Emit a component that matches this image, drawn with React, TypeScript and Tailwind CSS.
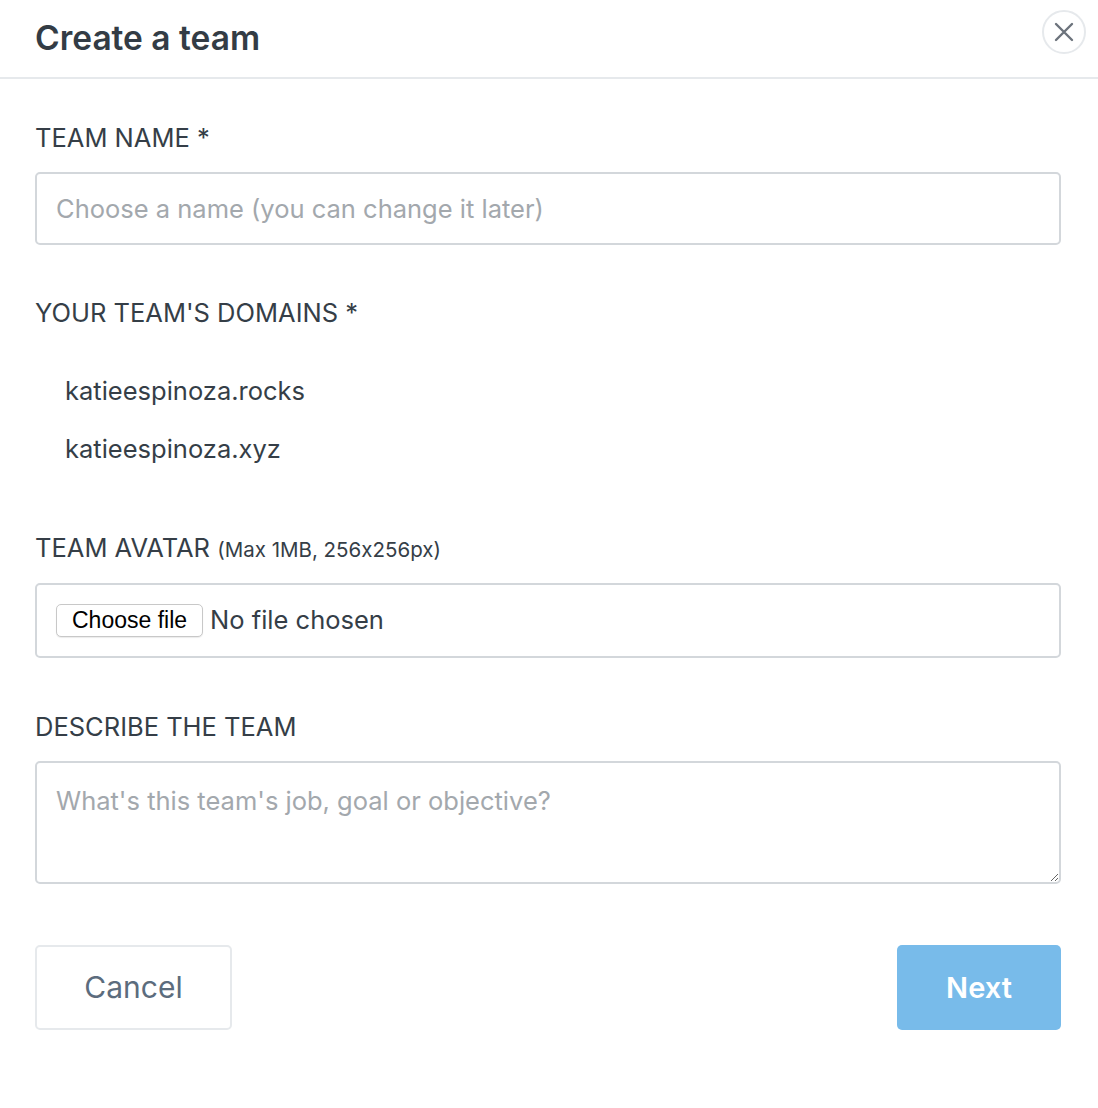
import React from 'react';

const font = { fontFamily: 'Inter, Lato, sans-serif', fontFeatureSettings: '"calt" 0' };

function Label({ children }: { children: React.ReactNode }) {
  return <div className="text-[25.5px] leading-[30px] text-[#353e47]">{children}</div>;
}

export default function App() {
  return (
    <div className="min-h-[1108px] bg-white" style={font}>
      {/* Header */}
      <div className="h-[79px] border-b-2 border-[#e6e9ec] pl-[35px] pr-[12px] flex justify-between">
        <h1 className="text-[33.5px] font-semibold text-[#333c45] leading-[40px] mt-[18px]">Create a team</h1>
        <button
          type="button"
          className="mt-[10px] w-[44px] h-[44px] rounded-full border-2 border-[#e6e9ec] flex items-center justify-center text-[#6c737c]"
        >
          <svg width="22" height="22" viewBox="0 0 22 22" fill="none" stroke="currentColor" strokeWidth="2.4" strokeLinecap="round">
            <path d="M3 3L19 19M19 3L3 19" />
          </svg>
        </button>
      </div>

      <form className="pl-[35px] pr-[37px] pt-[44px]" onSubmit={(e) => e.preventDefault()}>
        <Label>TEAM NAME *</Label>
        <input
          type="text"
          placeholder="Choose a name (you can change it later)"
          className="mt-[19px] w-full h-[73px] rounded-[5px] border-2 border-[#d3d7db] px-[19px] text-[25.5px] text-[#353e47] placeholder:text-[#a3a8ad] outline-none"
        />

        <div className="mt-[53px]">
          <Label>YOUR TEAM'S DOMAINS *</Label>
        </div>
        <div className="pl-[30px] mt-[48px] flex flex-col gap-[28px] text-[25.5px] leading-[30px] text-[#353e47]">
          <div>katieespinoza.rocks</div>
          <div>katieespinoza.xyz</div>
        </div>

        <div className="mt-[69px]">
          <Label>
            TEAM AVATAR <span className="text-[20.5px]">(Max 1MB, 256x256px)</span>
          </Label>
        </div>
        <div className="mt-[18px] h-[75px] rounded-[5px] border-2 border-[#d3d7db] px-[19px] flex items-center gap-[7px]">
          <span className="h-[33px] px-[15px] rounded-[5px] border border-[#c8c8c8] bg-white shadow-[0_1px_1px_rgba(0,0,0,0.08)] flex items-center text-[23px] text-black" style={{ fontFamily: '"Liberation Sans", Arial, sans-serif' }}>
            Choose file
          </span>
          <span className="text-[25.5px] text-[#353e47]">No file chosen</span>
        </div>

        <div className="mt-[54px]">
          <Label>DESCRIBE THE TEAM</Label>
        </div>
        <textarea
          placeholder="What's this team's job, goal or objective?"
          className="mt-[19px] block w-full h-[123px] rounded-[5px] border-2 border-[#d3d7db] px-[19px] py-[23px] text-[25.5px] leading-[30px] text-[#353e47] placeholder:text-[#a3a8ad] outline-none"
        />

        <div className="mt-[61px] flex justify-between">
          <button
            type="button"
            className="w-[197px] h-[85px] rounded-[5px] border-2 border-[#e6e9ec] bg-white text-[30px] text-[#5c6c7d]"
          >
            Cancel
          </button>
          <button
            type="button"
            className="w-[164px] h-[85px] rounded-[5px] bg-[#78bbea] text-[29px] font-semibold text-white"
          >
            Next
          </button>
        </div>
      </form>
    </div>
  );
}
